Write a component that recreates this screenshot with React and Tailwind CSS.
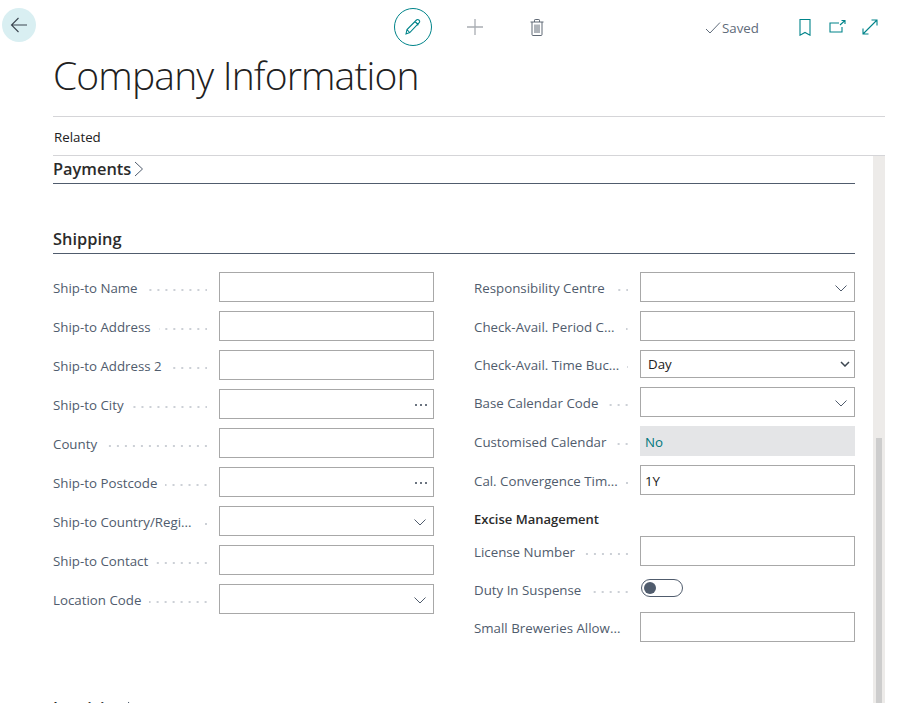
const Leader = () => (
  <div className="flex-1 min-w-0 h-[2px] mt-[1px] ml-2 mr-[1px] bg-[linear-gradient(to_left,#ccd0d6_2px,transparent_2px)] bg-[length:8px_2px] bg-repeat-x bg-right" />
);

const Chevron = () => (
  <svg width="14" height="14" viewBox="0 0 14 14" fill="none" stroke="#505c6d" strokeWidth="1" className="absolute right-[7px] top-[9px]">
    <path d="M1.5 4.5 7 10l5.5-5.5" />
  </svg>
);

const Ellipsis = () => (
  <span className="absolute right-[7px] top-[15px] flex gap-[3px]">
    <i className="w-[2px] h-[2px] bg-[#6b7480] block" />
    <i className="w-[2px] h-[2px] bg-[#6b7480] block" />
    <i className="w-[2px] h-[2px] bg-[#6b7480] block" />
  </span>
);

const Field = ({ label, children, className = 'h-[30px] mb-[9px]' }) => (
  <div className={`flex items-center ${className}`}>
    <div className="w-[155px] flex items-center mr-[11px] shrink-0 mt-[4px]">
      <span className="text-[13.3px] text-[#505c6d] whitespace-nowrap">{label}</span>
      <Leader />
    </div>
    <div className="relative w-[215px] h-full">{children}</div>
  </div>
);

const TextBox = ({ value = '' }) => (
  <input readOnly value={value} className="w-full h-full border border-[#a8a8a8] bg-white px-[4px] pt-[1px] text-[13.3px] text-[#212121] outline-none" />
);

const left = [
  ['Ship-to Name'],
  ['Ship-to Address'],
  ['Ship-to Address 2'],
  ['Ship-to City', 'more'],
  ['County'],
  ['Ship-to Postcode', 'more'],
  ['Ship-to Country/Regi...', 'drop'],
  ['Ship-to Contact'],
  ['Location Code', 'drop'],
];

const Extra = ({ kind }) => {
  if (kind === 'more') return <Ellipsis />;
  if (kind === 'drop') return <Chevron />;
  return null;
};

const SectionChevron = () => (
  <svg width="10" height="16" viewBox="0 0 10 16" fill="none" stroke="#505c6d" strokeWidth="1" className="ml-[3px]">
    <path d="M1 1l7.5 7L1 15" />
  </svg>
);

export default function App() {
  return (
    <div className="w-[899px] h-[703px] overflow-hidden bg-white flex flex-col font-['Open_Sans',sans-serif]">
      {/* toolbar */}
      <div className="h-[50px] shrink-0 flex items-start">
        <button className="ml-[2px] mt-[8px] w-[34px] h-[34px] rounded-full bg-[#d9eff2] flex items-center justify-center">
          <svg width="18" height="16" viewBox="0 0 18 16" fill="none" stroke="#3c4650" strokeWidth="1.1">
            <path d="M17 8H1.5M8.5 1 1.5 8l7 7" />
          </svg>
        </button>
        <button className="ml-[358px] mt-[8px] w-[38px] h-[38px] rounded-full border border-[#00848a] flex items-center justify-center">
          <svg width="18" height="18" viewBox="0 0 18 18" fill="none" stroke="#00848a" strokeWidth="1.1">
            <path d="M2 16l1-4.5L12.5 2a1.6 1.6 0 0 1 2.3 0l.4.4a1.6 1.6 0 0 1 0 2.3L5.8 14.6 2 16zM11 3.5l3.5 3.5M3 11.5 6 15" />
          </svg>
        </button>
        <svg width="18" height="18" viewBox="0 0 18 18" fill="none" stroke="#a9adb3" strokeWidth="1.3" className="ml-[34px] mt-[18px]">
          <path d="M9 1v16M1 9h16" />
        </svg>
        <svg width="14" height="17" viewBox="0 0 14 17" fill="none" stroke="#5f6874" strokeWidth="1" className="ml-[46px] mt-[19px]">
          <path d="M.5 3h13M2 3v12.5a1 1 0 0 0 1 1h8a1 1 0 0 0 1-1V3M4.5 3V1.2a.7.7 0 0 1 .7-.7h3.6a.7.7 0 0 1 .7.7V3M5 5.5v8.5M7 5.5v8.5M9 5.5v8.5" />
        </svg>
        <div className="ml-[161px] mt-[18px] flex items-center text-[#5f6b7a] text-[13.3px] leading-[20px]">
          <svg width="16" height="14" viewBox="0 0 16 14" fill="none" stroke="#5f6b7a" strokeWidth="1" className="mr-[1px]">
            <path d="M1 8l4 4L15 1.5" />
          </svg>
          Saved
        </div>
        <svg width="12" height="17" viewBox="0 0 12 17" fill="none" stroke="#00848a" strokeWidth="1.1" className="ml-[40px] mt-[19px]">
          <path d="M1 .5h10v15.7L6 13.5 1 16.2V.5z" />
        </svg>
        <svg width="17" height="13" viewBox="0 0 17 13" fill="none" stroke="#00848a" strokeWidth="1.1" className="ml-[18px] mt-[20px]">
          <path d="M10 3H1v9h12V7M11 5l5-4.5M12.5.5H16V4" />
        </svg>
        <svg width="16" height="16" viewBox="0 0 16 16" fill="none" stroke="#00848a" strokeWidth="1.1" className="ml-[16px] mt-[19px]">
          <path d="M1 15 15 1M9.5 1H15v5.5M1 9.5V15h5.5" />
        </svg>
      </div>

      {/* page header */}
      <div className="ml-[53px] w-[832px] shrink-0">
        <div className="h-[66px] border-b border-[#d5d5d8] box-content">
          <h1 className="text-[39px] tracking-[-0.85px] font-light leading-[50px] text-[#212121]">Company Information</h1>
        </div>
        <div className="h-[39px] pt-[4px] border-b border-[#d5d5d8] flex items-center pl-[1px] text-[13.3px] text-[#212121]">
          Related
        </div>
      </div>

      {/* content */}
      <div className="flex-1 min-h-0 flex">
        <div className="ml-[53px] w-[802px] shrink-0">
          <div className="h-[26px] pb-[1px] border-b border-[#505c6d] box-content flex items-center">
            <span className="text-[16.4px] font-semibold text-[#2b2b2b]">Payments</span>
            <SectionChevron />
          </div>
          <div className="mt-[42px] h-[26px] pb-[1px] border-b border-[#505c6d] box-content flex items-center">
            <span className="text-[16.4px] font-semibold text-[#2b2b2b]">Shipping</span>
          </div>

          <div className="mt-[18px] flex h-[400px]">
            <div className="w-[381px] mr-[40px]">
              {left.map(([label, kind]) => (
                <Field key={label} label={label}>
                  <TextBox />
                  <Extra kind={kind} />
                </Field>
              ))}
            </div>
            <div className="w-[381px]">
              <Field label="Responsibility Centre">
                <TextBox />
                <Chevron />
              </Field>
              <Field label="Check-Avail. Period C...">
                <TextBox />
              </Field>
              <Field label="Check-Avail. Time Buc..." className="h-[28px] mb-[9px]">
                <select className="appearance-none w-full h-full border border-[#a8a8a8] bg-white pl-[7px] pt-[2px] text-[13.3px] text-[#212121] outline-none">
                  <option>Day</option>
                </select>
                <svg width="10" height="6" viewBox="0 0 10 6" fill="none" stroke="#3c4650" strokeWidth="1.5" className="absolute right-[5px] top-[11px]">
                  <path d="M1 1l4 4 4-4" />
                </svg>
              </Field>
              <Field label="Base Calendar Code">
                <TextBox />
                <Chevron />
              </Field>
              <Field label="Customised Calendar">
                <div className="w-full h-full bg-[#e4e5e7] flex items-center pl-[5px] pt-[3px] text-[13.3px] text-[#00787d]">No</div>
              </Field>
              <Field label="Cal. Convergence Tim...">
                <TextBox value="1Y" />
              </Field>
              <div className="h-[32px] flex items-center text-[13px] font-semibold text-[#2b2b2b]">Excise Management</div>
              <Field label="License Number">
                <TextBox />
              </Field>
              <Field label="Duty In Suspense" className="h-[20px] mb-[13px] mt-[13px]">
                <div className="ml-[1px] w-[42px] h-[18px] rounded-full border border-[#505c6d] flex items-center pl-[2px]">
                  <span className="w-[12px] h-[12px] rounded-full bg-[#505c6d]" />
                </div>
              </Field>
              <Field label="Small Breweries Allow...">
                <TextBox />
              </Field>
            </div>
          </div>

          <div className="mt-[23px] flex items-center h-[27px]">
            <span className="text-[16.4px] font-semibold text-[#2b2b2b]">Invoicing</span>
            <SectionChevron />
          </div>
        </div>

        {/* scrollbar */}
        <div className="ml-[18px] w-[12px] bg-[#edebe9] flex flex-col items-center">
          <div className="h-[282px] shrink-0" />
          <div className="w-[6px] flex-1 bg-[#cdcdcd]" />
        </div>
      </div>
    </div>
  );
}
